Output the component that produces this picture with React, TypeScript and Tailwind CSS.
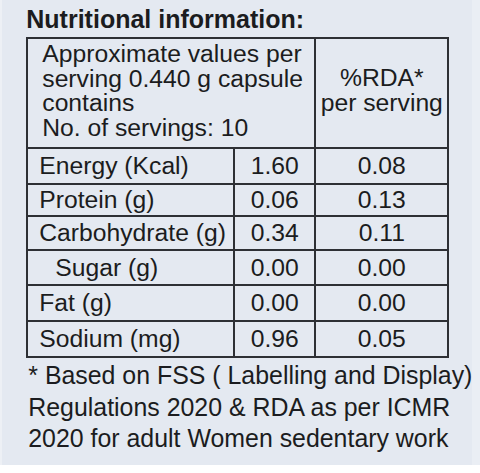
const rows = [
  { name: 'Energy (Kcal)', value: '1.60', rda: '0.08', h: 'h-[36px]', indent: false },
  { name: 'Protein (g)', value: '0.06', rda: '0.13', h: 'h-[32px]', indent: false },
  { name: 'Carbohydrate (g)', value: '0.34', rda: '0.11', h: 'h-[34px]', indent: false },
  { name: 'Sugar (g)', value: '0.00', rda: '0.00', h: 'h-[35px]', indent: true },
  { name: 'Fat (g)', value: '0.00', rda: '0.00', h: 'h-[36px]', indent: false },
  { name: 'Sodium (mg)', value: '0.96', rda: '0.05', h: 'h-[34px]', indent: false },
];

const App = () => {
  return (
    <div
      className="w-[480px] h-[473px] bg-white overflow-hidden text-[#1b1c20]"
      style={{ fontFamily: '"Liberation Sans", Arial, sans-serif' }}
    >
      <div className="flex h-[465px]">
        <div className="w-[3px] bg-[#edf0f5]" />
        <div className="flex-1 bg-[#e4e9f1] pl-[24px] pt-[5px]">
          {/* Title */}
          <h1 className="text-[25px] leading-[28px] font-bold mb-[4px]">Nutritional information:</h1>

          {/* Table */}
          <div className="w-[423px] border-2 border-[#2e3035] text-[24.7px]">
            <div className="flex h-[110px] border-b-2 border-[#2e3035]">
              <div className="w-[288px] border-r-2 border-[#2e3035] pl-[14px] pt-[3px] leading-[24.5px]">
                Approximate values per
                <br />
                serving 0.440 g capsule
                <br />
                contains
                <br />
                No. of servings: 10
              </div>
              <div className="flex-1 flex flex-col items-center justify-center leading-[25px] pb-[6px]">
                <span>%RDA*</span>
                <span>per serving</span>
              </div>
            </div>

            {rows.map((row, i) => (
              <div
                key={row.name}
                className={`flex ${row.h} ${i < rows.length - 1 ? 'border-b-2 border-[#2e3035]' : ''}`}
              >
                <div
                  className={`w-[207px] border-r-2 border-[#2e3035] flex items-center ${row.indent ? 'pl-[27px]' : 'pl-[11px]'}`}
                >
                  {row.name}
                </div>
                <div className="w-[81px] border-r-2 border-[#2e3035] flex items-center justify-center">
                  {row.value}
                </div>
                <div className="flex-1 flex items-center justify-center">{row.rda}</div>
              </div>
            ))}
          </div>

          {/* Footnote */}
          <p className="mt-[2px] pl-[2px] text-[24.9px] leading-[31.5px] whitespace-nowrap">
            * Based on FSS ( Labelling and Display)
            <br />
            Regulations 2020 &amp; RDA as per ICMR
            <br />
            2020 for adult Women sedentary work
          </p>
        </div>
        <div className="w-[10px] bg-[#eaeef4]" />
      </div>
    </div>
  );
};

export default App;
